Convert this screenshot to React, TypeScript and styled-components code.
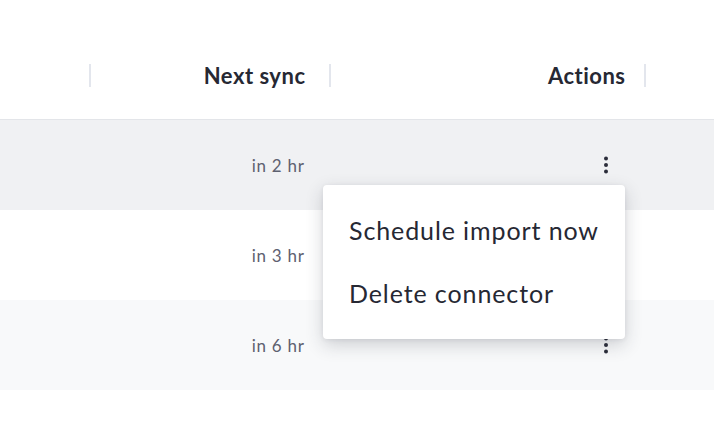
import React from "react";
import styled, { createGlobalStyle } from "styled-components";

const Global = createGlobalStyle`
  html, body { margin: 0; padding: 0; background: #ffffff; }
  body { font-family: Lato, "Open Sans", sans-serif; width: 714px; height: 448px; overflow: hidden; }
`;

const Table = styled.div`
  display: grid;
  grid-template-columns: 90px 240px 315px 1fr;
  width: 714px;
`;

const HeaderCell = styled.div`
  height: 120px;
  border-bottom: 1px solid #e3e5e9;
  display: flex;
  align-items: flex-end;
  justify-content: flex-end;
  padding-bottom: 32px;
  box-sizing: border-box;
`;

const HeaderLabel = styled.span<{ $gap: number }>`
  font-weight: 700;
  font-size: 22px;
  line-height: 23px;
  letter-spacing: 0.5px;
  color: #262833;
  margin-right: ${(p) => p.$gap}px;
`;

const Divider = styled.span`
  width: 2px;
  height: 23px;
  background: #e3e6ed;
  margin-right: -1px;
`;

const Cell = styled.div<{ $bg: string; $pr?: number }>`
  height: 90px;
  background: ${(p) => p.$bg};
  display: flex;
  align-items: center;
  justify-content: flex-end;
  padding-right: ${(p) => p.$pr ?? 0}px;
  box-sizing: border-box;
  position: relative;
`;

const SyncText = styled.span`
  font-size: 17px;
  color: #5e6170;
  letter-spacing: 0.75px;
  margin-right: -0.75px;
`;

const KebabButton = styled.button`
  width: 24px;
  height: 24px;
  border: none;
  background: transparent;
  padding: 0;
  display: flex;
  align-items: center;
  justify-content: center;
  cursor: pointer;
`;

const Menu = styled.div`
  position: absolute;
  top: 65px;
  right: 20px;
  width: 302px;
  background: #ffffff;
  border-radius: 4px;
  box-shadow: 0 6px 18px rgba(40, 44, 60, 0.2), 0 1px 4px rgba(40, 44, 60, 0.08);
  padding: 13px 0 15px;
  z-index: 10;
  box-sizing: border-box;
`;

const MenuItem = styled.div`
  height: 63px;
  display: flex;
  align-items: center;
  padding-left: 26px;
  font-size: 25px;
  color: #262833;
  letter-spacing: 0.9px;
`;

const Kebab = () => (
  <KebabButton aria-label="Actions">
    <svg width="6" height="20" viewBox="0 0 6 20">
      <circle cx="3" cy="3.5" r="2" fill="#2b2d3a" />
      <circle cx="3" cy="10" r="2" fill="#2b2d3a" />
      <circle cx="3" cy="16.5" r="2" fill="#2b2d3a" />
    </svg>
  </KebabButton>
);

const rows = [
  { sync: "in 2 hr", bg: "#f0f1f3", open: true },
  { sync: "in 3 hr", bg: "#ffffff", open: false },
  { sync: "in 6 hr", bg: "#f8f9fa", open: false },
];

export default function App() {
  return (
    <>
      <Global />
      <Table>
        <HeaderCell>
          <Divider />
        </HeaderCell>
        <HeaderCell>
          <HeaderLabel $gap={23.5}>Next sync</HeaderLabel>
          <Divider />
        </HeaderCell>
        <HeaderCell>
          <HeaderLabel $gap={18.5}>Actions</HeaderLabel>
          <Divider />
        </HeaderCell>
        <HeaderCell />
        {rows.map((r) => (
          <React.Fragment key={r.sync}>
            <Cell $bg={r.bg} />
            <Cell $bg={r.bg} $pr={26}>
              <SyncText>{r.sync}</SyncText>
            </Cell>
            <Cell $bg={r.bg} $pr={27}>
              <Kebab />
              {r.open && (
                <Menu>
                  <MenuItem>Schedule import now</MenuItem>
                  <MenuItem>Delete connector</MenuItem>
                </Menu>
              )}
            </Cell>
            <Cell $bg={r.bg} />
          </React.Fragment>
        ))}
      </Table>
    </>
  );
}
